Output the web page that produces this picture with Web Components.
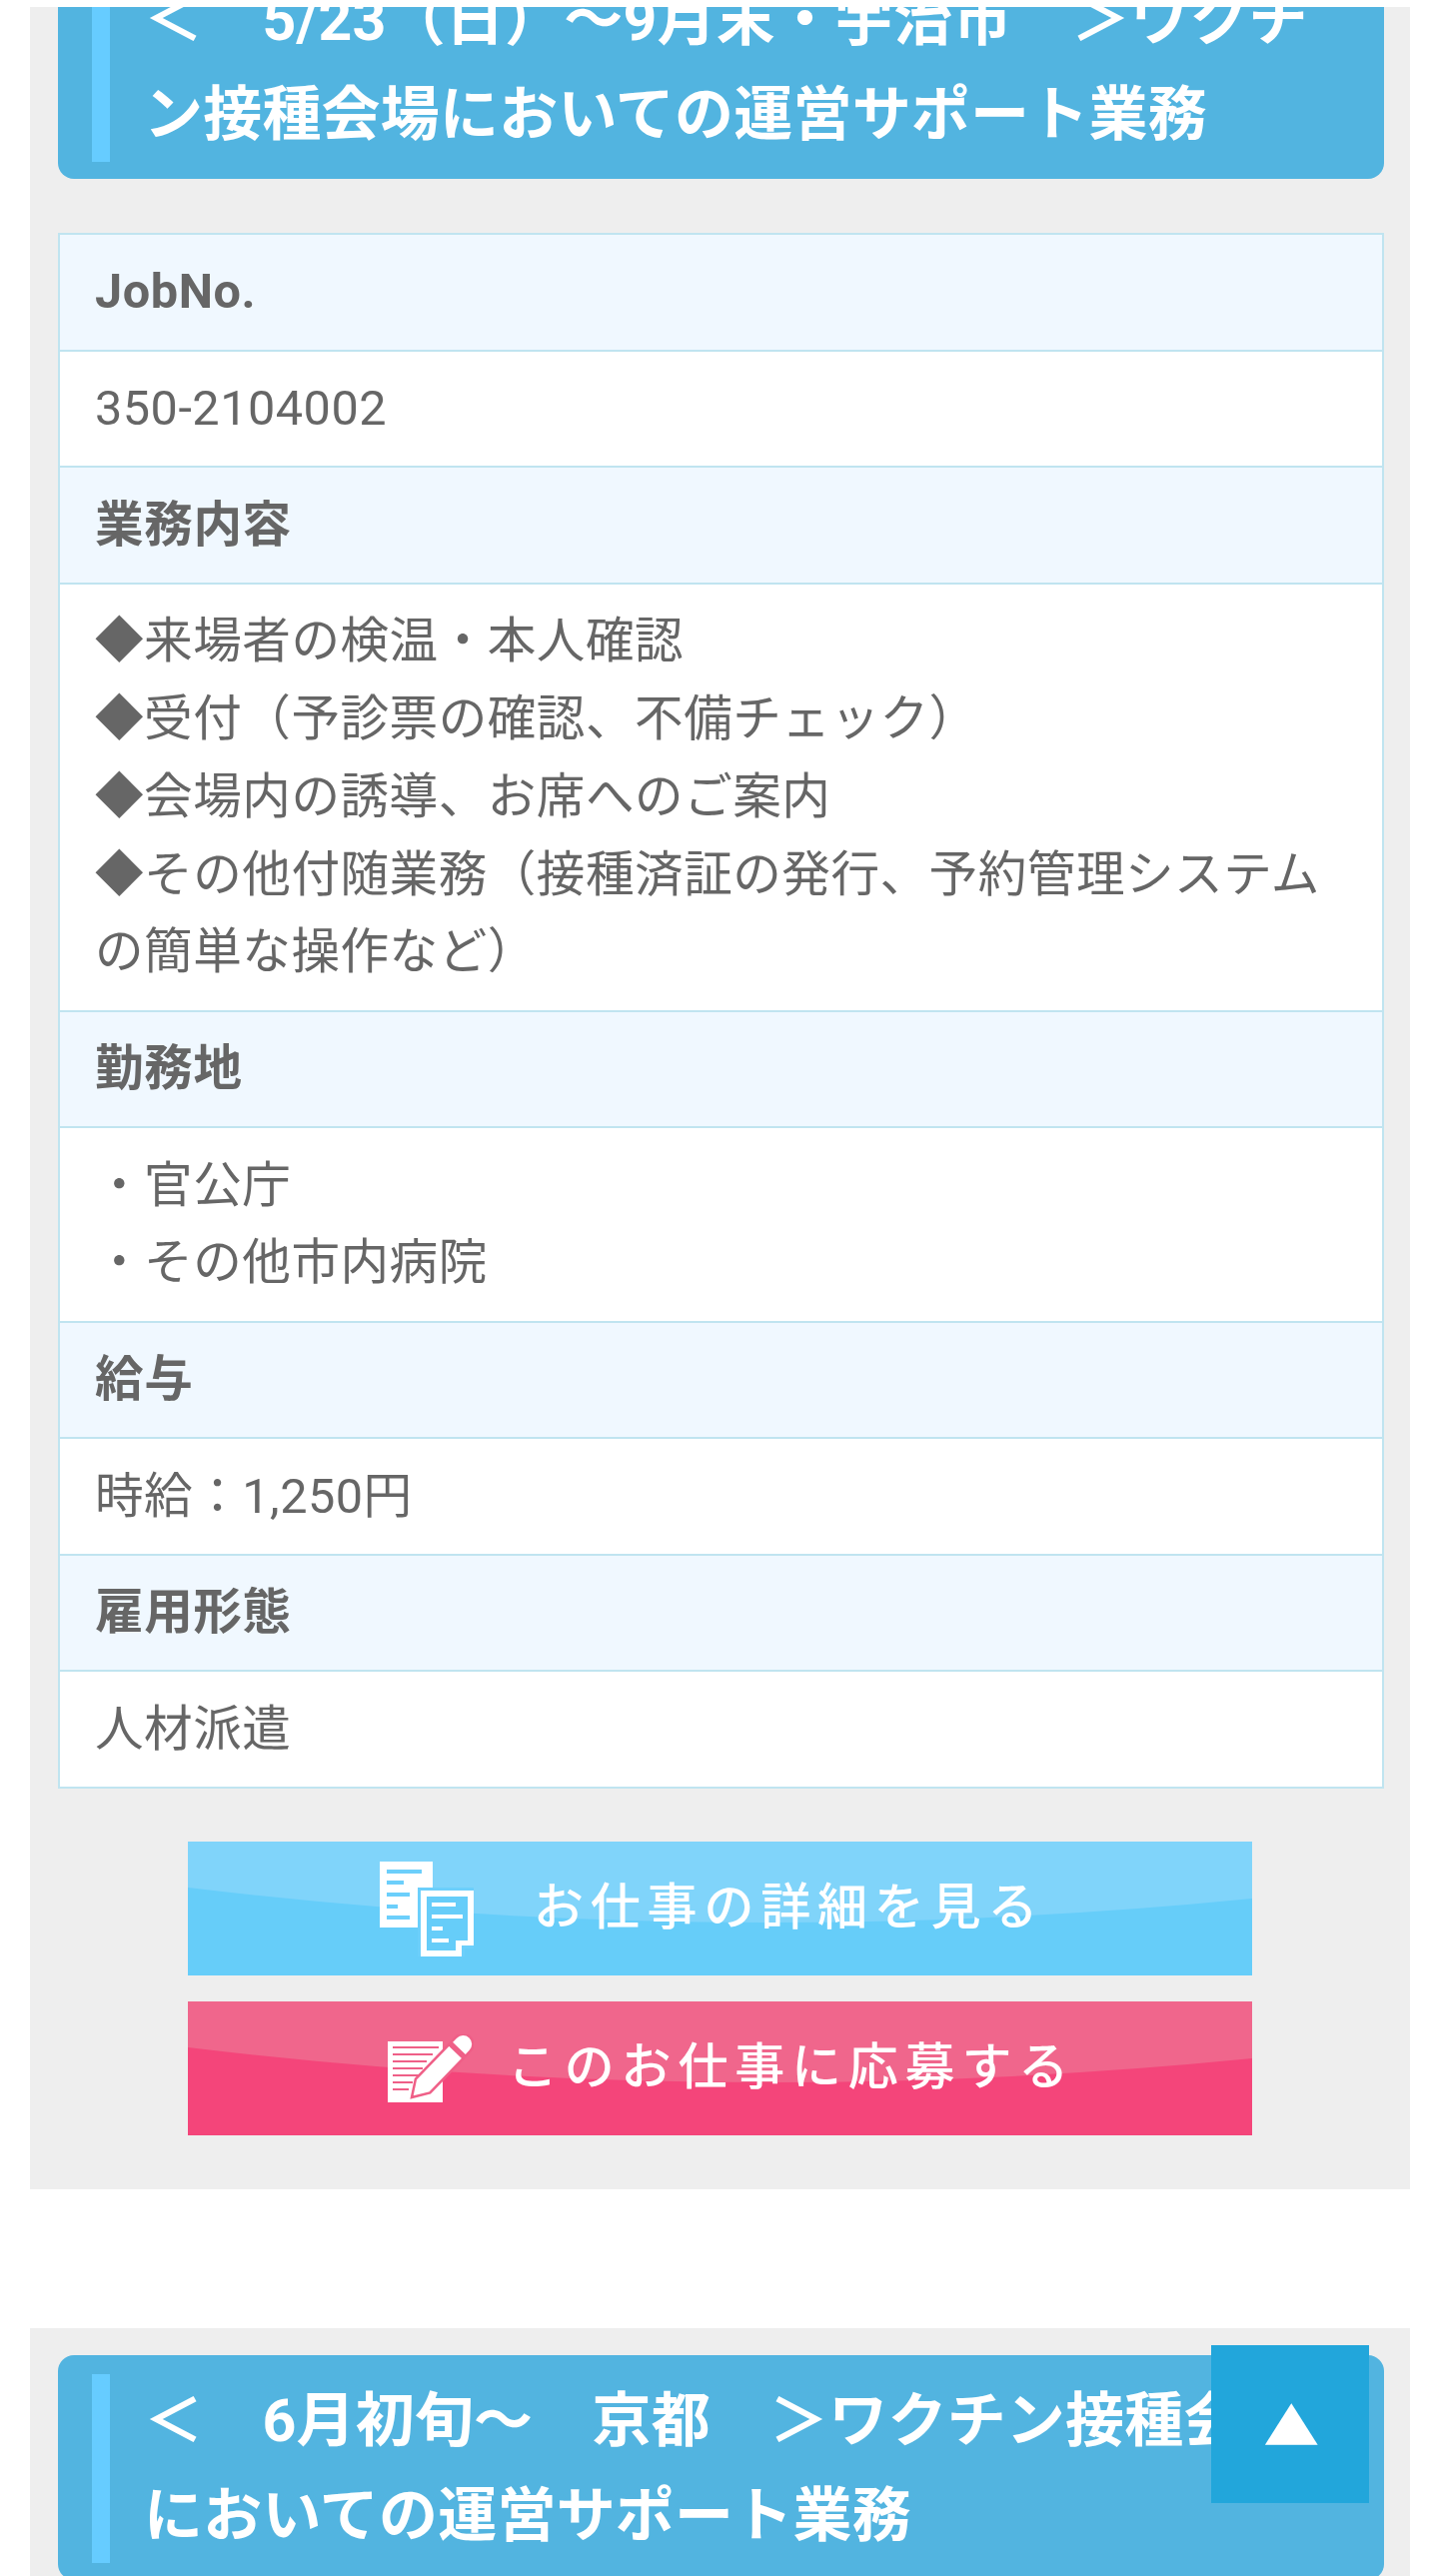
<!DOCTYPE html>
<html lang="ja">
<head>
<meta charset="utf-8">
<title>お仕事情報</title>
<style>
  html, body { margin: 0; background: #fff; }
  body { height: 2578px; overflow: hidden; font-family: Roboto, "Noto Sans CJK JP", sans-serif; color: #666; }
</style>
</head>
<body>
<job-list>
  <job-section style="--title-top: -80px">
    <job-title>＜　5/23（日）～9月末・宇治市　＞ワクチン接種会場においての運営サポート業務</job-title>
    <job-table>
      <job-field label="JobNo.">350-2104002</job-field>
      <job-field label="業務内容">◆来場者の検温・本人確認<br>◆受付（予診票の確認、不備チェック）<br>◆会場内の誘導、お席へのご案内<br>◆その他付随業務（接種済証の発行、予約管理システムの簡単な操作など）</job-field>
      <job-field label="勤務地">・官公庁<br>・その他市内病院</job-field>
      <job-field label="給与">時給：1,250円</job-field>
      <job-field label="雇用形態">人材派遣</job-field>
    </job-table>
    <action-button kind="detail" style="--pad: 192px; --gap: 60px">
      <svg slot="icon" width="94" height="95" viewBox="0 0 94 95">
        <rect width="53" height="66" fill="#fff"/>
        <g fill="#6ccffb">
          <rect x="7" y="8" width="35" height="4"/><rect x="7" y="19" width="17" height="4"/>
          <rect x="7" y="31" width="23" height="4"/><rect x="7" y="43" width="11" height="4"/>
          <rect x="7" y="54" width="23" height="4"/>
        </g>
        <path d="M41 29H94V84H82V95H41Z" fill="#fff" stroke="#6ccffb" stroke-width="6" paint-order="stroke"/>
        <path d="M47 35H88V79H76V89H47Z" fill="#66cdf9"/>
        <g fill="#fff">
          <rect x="52" y="41" width="24" height="4"/><rect x="52" y="53" width="31" height="4"/>
          <rect x="52" y="65" width="11" height="4"/><rect x="52" y="77" width="17" height="4"/>
        </g>
      </svg>
      お仕事の詳細を見る
    </action-button>
    <action-button kind="apply" style="--pad: 200px; --gap: 34px">
      <svg slot="icon" width="86" height="68" viewBox="0 0 86 68">
        <rect y="7" width="55" height="61" fill="#fff"/>
        <g fill="#ef5f87">
          <rect x="5" y="12" width="46" height="2"/><rect x="5" y="19" width="40" height="2"/>
          <rect x="5" y="26" width="34" height="2"/><rect x="5" y="33" width="30" height="2"/>
          <rect x="5" y="40" width="28" height="2"/><rect x="5" y="47" width="20" height="2"/>
          <rect x="5" y="54" width="16" height="2"/>
        </g>
        <g transform="translate(24 63) rotate(-46)" stroke="#ef5f87" stroke-width="2.5" fill="#fff">
          <path d="M0 0L16 -10H64V10H16Z"/>
          <path d="M67 -10H74A10 10 0 0 1 74 10H67Z"/>
        </g>
      </svg>
      このお仕事に応募する
    </action-button>
  </job-section>
  <job-section>
    <job-title>＜　6月初旬～　京都　＞ワクチン接種会場においての運営サポート業務</job-title>
  </job-section>
</job-list>
<scroll-top></scroll-top>

<script>
class JobList extends HTMLElement {
  constructor() {
    super();
    this.attachShadow({ mode: 'open' }).innerHTML = `
      <style>
        :host { display: flex; flex-direction: column; gap: 139px; margin-top: 7px; height: 2571px; overflow: hidden; }
      </style>
      <slot></slot>`;
  }
}

class JobSection extends HTMLElement {
  constructor() {
    super();
    this.attachShadow({ mode: 'open' }).innerHTML = `
      <style>
        :host { display: flex; flex: none; flex-direction: column; margin: 0 29px 0 30px; padding: 27px 26px 54px 28px; background: #eee; }
        ::slotted(job-title) { margin-top: var(--title-top, 0); }
      </style>
      <slot></slot>`;
  }
}

class JobTitle extends HTMLElement {
  constructor() {
    super();
    this.attachShadow({ mode: 'open' }).innerHTML = `
      <style>
        :host { display: block; padding: 19px 0 17px 34px; background: #52b4e0; border-radius: 16px; color: #fff; }
        div { padding: 0 40px 0 34px; border-left: 18px solid #66ccff; font-size: 59px; font-weight: 700; line-height: 94.5px; letter-spacing: 0.2px; }
      </style>
      <div><slot></slot></div>`;
  }
}

class JobTable extends HTMLElement {
  constructor() {
    super();
    this.attachShadow({ mode: 'open' }).innerHTML = `
      <style>
        :host { display: block; margin: 54px 0 53px; background: #fff; border: solid #c0e4f0; border-width: 0 2px 2px; }
      </style>
      <slot></slot>`;
  }
}

class JobField extends HTMLElement {
  constructor() {
    super();
    this.attachShadow({ mode: 'open' }).innerHTML = `
      <style>
        :host { display: block; font-size: 48.6px; line-height: 1.6; letter-spacing: 0.5px; }
        div { padding: 18.44px 35px; border-top: 2px solid #c0e4f0; }
        .label { background: #f0f8ff; font-weight: 700; letter-spacing: 0.6px; }
      </style>
      <div class="label"></div>
      <div><slot></slot></div>`;
    this.shadowRoot.querySelector('.label').textContent = this.getAttribute('label');
  }
}

class ActionButton extends HTMLElement {
  static colors = {
    detail: ['#66cdf9', '#80d4fa'],
    apply: ['#f4457a', '#f0668c'],
  };

  constructor() {
    super();
    const [base, light] = ActionButton.colors[this.getAttribute('kind')];
    this.attachShadow({ mode: 'open' }).innerHTML = `
      <style>
        :host { display: flex; position: relative; align-items: center; gap: var(--gap); height: 134px; margin: 0 132px 26px 130px; padding-left: var(--pad); background: ${base}; color: #fff; font-size: 50px; font-weight: 500; letter-spacing: 6.8px; white-space: nowrap; }
        :host(:last-child) { margin-bottom: 0; }
        svg.wave { position: absolute; left: 0; top: 0; }
        span { position: relative; display: flex; }
        span.text { padding-bottom: 12px; }
      </style>
      <svg class="wave" width="1065" height="134" viewBox="0 0 1065 134"><path d="M0 0H1065V57Q530 110 0 46Z" fill="${light}"/></svg>
      <span><slot name="icon"></slot></span>
      <span class="text"><slot></slot></span>`;
  }
}

class ScrollTop extends HTMLElement {
  constructor() {
    super();
    this.attachShadow({ mode: 'open' }).innerHTML = `
      <style>
        :host { display: flex; position: fixed; right: 70px; bottom: 73px; width: 158px; height: 158px; align-items: center; justify-content: center; background: #22a6db; color: #fff; font: 60px/1 "DejaVu Sans", sans-serif; }
        span { padding: 0 0 12px 3px; transform: scale(1.15, 0.9); }
      </style>
      <span>▲</span>`;
  }
}

customElements.define('job-list', JobList);
customElements.define('job-section', JobSection);
customElements.define('job-title', JobTitle);
customElements.define('job-table', JobTable);
customElements.define('job-field', JobField);
customElements.define('action-button', ActionButton);
customElements.define('scroll-top', ScrollTop);
</script>
</body>
</html>
